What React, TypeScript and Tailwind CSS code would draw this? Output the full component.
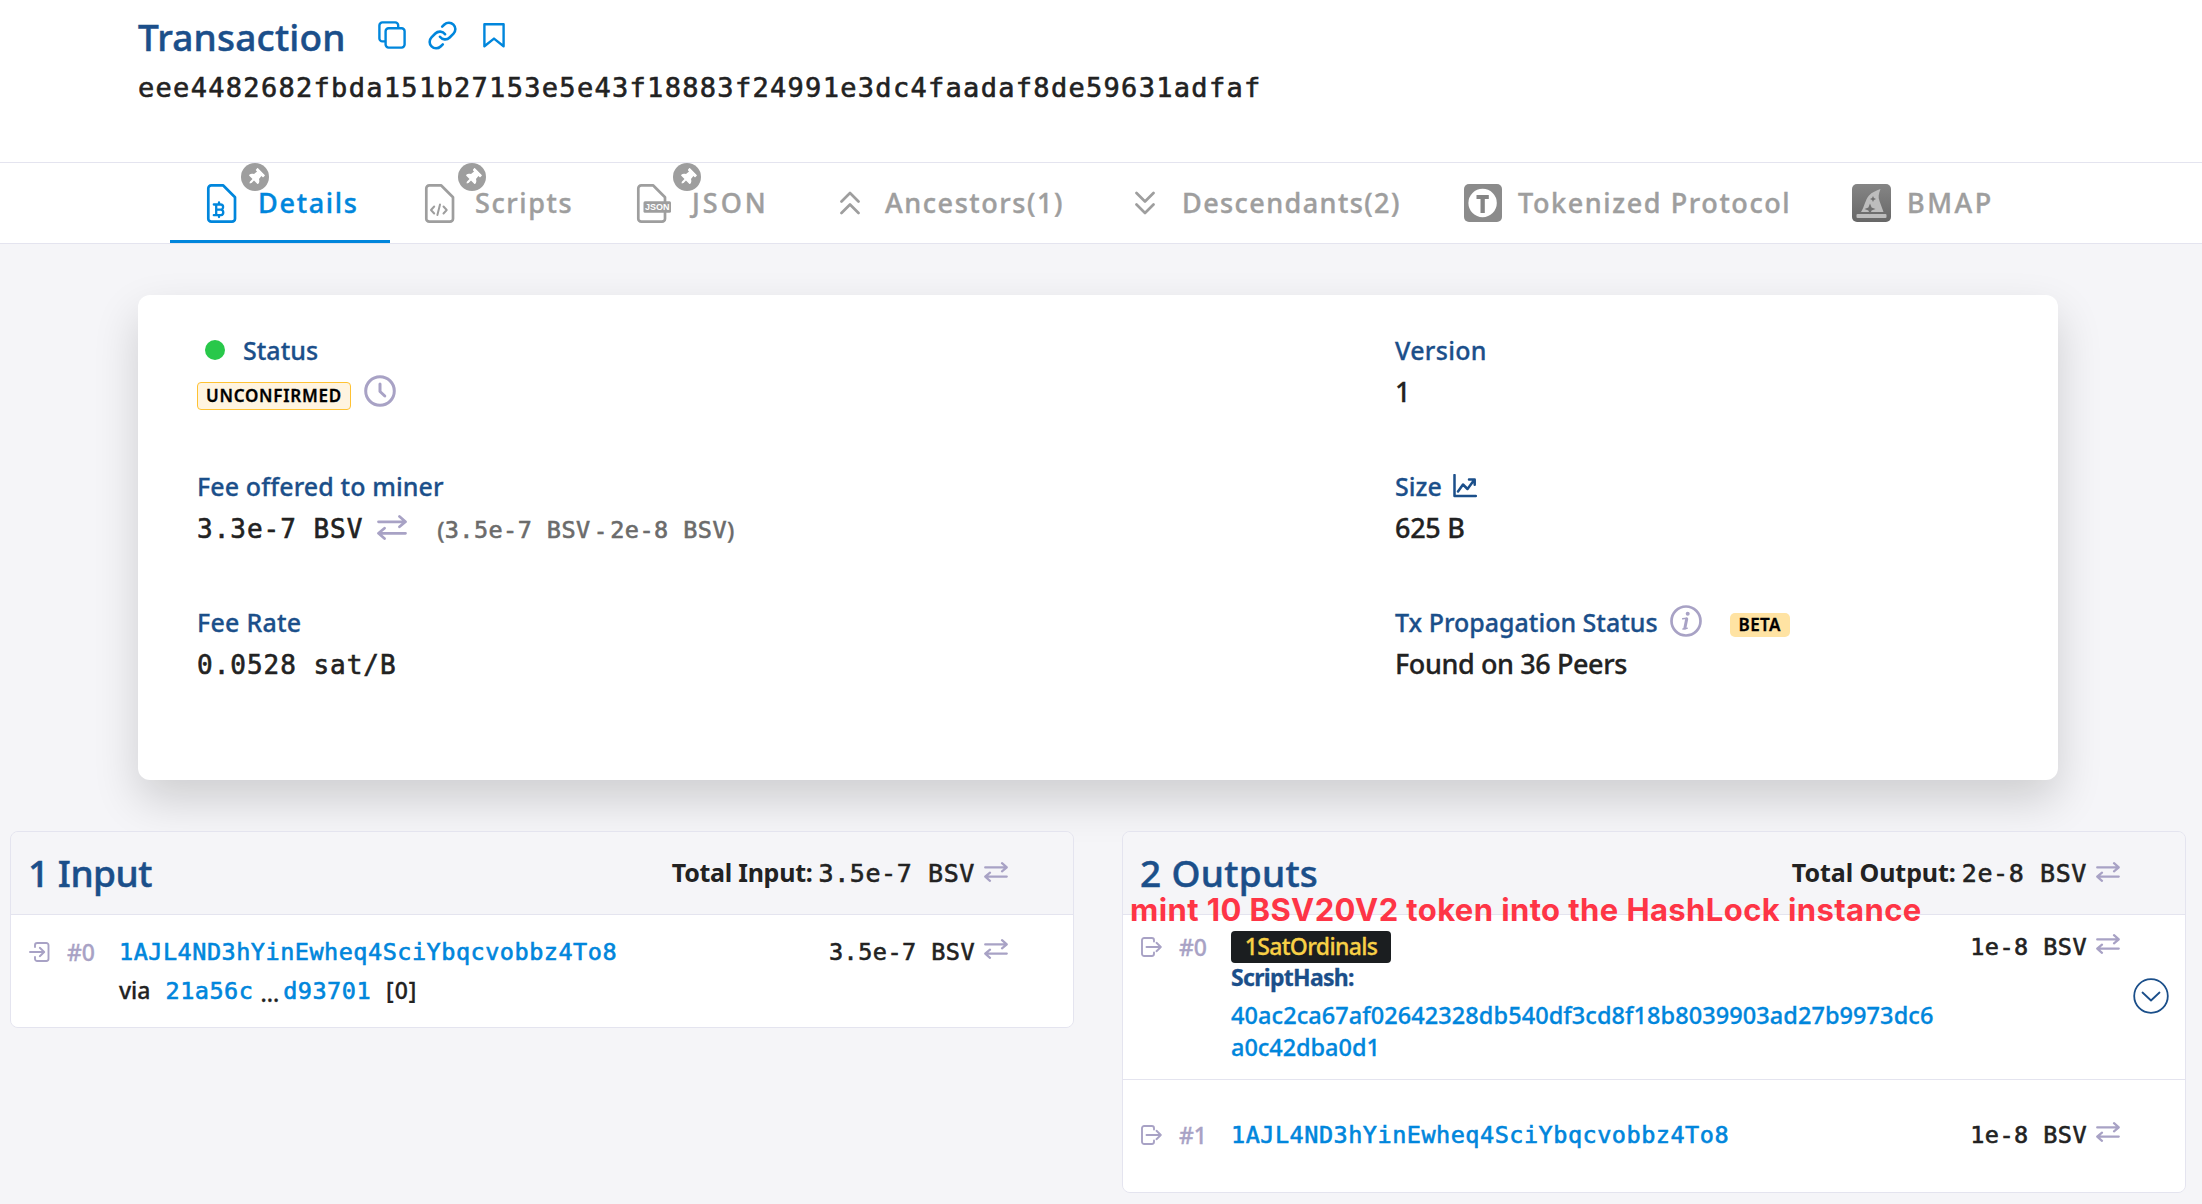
import type { ReactNode } from 'react';
import { FaThumbtack } from 'react-icons/fa';

function SwapIcon({ className = '' }: { className?: string }) {
  return (
    <svg viewBox="0 0 24 20" className={`shrink-0 text-[#a8a2c5] ${className}`} fill="none" stroke="currentColor" strokeWidth="2.2" strokeLinecap="round" strokeLinejoin="round">
      <path d="M1.2 5.4H22.6M18 1.2l4.8 4.2L18 9.4" />
      <path d="M22.8 14.6H1.4M6 10.6l-4.8 4L6 18.8" />
    </svg>
  );
}

function CopyIcon() {
  return (
    <svg viewBox="0 0 28 28" className="size-7" fill="none" stroke="currentColor" strokeWidth="2.4">
      <rect x="7.6" y="7.2" width="19" height="19.4" rx="3" />
      <path d="M7.6 20.4H4.4a3 3 0 0 1-3-3V4.4a3 3 0 0 1 3-3h12.8a3 3 0 0 1 3 3v2.8" />
    </svg>
  );
}

function LinkIcon() {
  return (
    <svg viewBox="0 0 24 24" className="size-[31px]" fill="none" stroke="currentColor" strokeWidth="2" strokeLinecap="round" strokeLinejoin="round">
      <path d="M10 13a5 5 0 0 0 7.54.54l3-3a5 5 0 0 0-7.07-7.07l-1.72 1.71" />
      <path d="M14 11a5 5 0 0 0-7.54-.54l-3 3a5 5 0 0 0 7.07 7.07l1.71-1.71" />
    </svg>
  );
}

function BookmarkIcon() {
  return (
    <svg viewBox="0 0 22 25" className="h-[25px] w-[22px]" fill="none" stroke="currentColor" strokeWidth="2.4" strokeLinejoin="round">
      <path d="M1.4 1.3h19.2v22L11 15.6 1.4 23.3z" />
    </svg>
  );
}

function FileIcon({ children }: { children: ReactNode }) {
  return (
    <svg viewBox="0 0 34 39" className="h-[39px] w-[34px] overflow-visible" fill="none" stroke="currentColor" strokeWidth="2.7" strokeLinecap="round" strokeLinejoin="round">
      <path d="M4.3 1.3H16L28 13.200v21.500a3 3 0 0 1-3 3H4.3a3 3 0 0 1-3-3V4.300a3 3 0 0 1 3-3z" />
      {children}
    </svg>
  );
}

function BitcoinFile() {
  return (
    <FileIcon>
      <path strokeWidth="2.3" d="M6.800 20.500h6.700a2.600 2.600 0 0 1 0 5.200H9.200M13.500 25.700h.5a2.800 2.800 0 0 1 0 5.500H6.800M9.200 20.500v10.700M12 18.300v2.200M12 31.200v1.800" />
    </FileIcon>
  );
}

function CodeFile() {
  return (
    <FileIcon>
      <path strokeWidth="2" d="M9.200 22.500L6 26l3.200 3.500M18.500 22.500l3.200 3.500-3.200 3.500M15 20.500l-2.600 10.500" />
    </FileIcon>
  );
}

function JsonFile() {
  return (
    <FileIcon>
      <rect x="6.500" y="17.300" width="27.500" height="11.400" rx="1.500" fill="currentColor" stroke="none" />
      <text x="20.300" y="26.200" textAnchor="middle" fontSize="9" fontWeight="700" fontFamily="Liberation Sans" fill="#fff" stroke="none">JSON</text>
    </FileIcon>
  );
}

function ChevronsIcon({ down = false }: { down?: boolean }) {
  return (
    <svg viewBox="0 0 20 24" className={`h-6 w-5 ${down ? 'rotate-180' : ''}`} fill="none" stroke="currentColor" strokeWidth="2.7" strokeLinecap="round" strokeLinejoin="round">
      <path d="M1.500 10.500L10 2l8.500 8.500M1.500 22L10 13.500l8.500 8.500" />
    </svg>
  );
}

function TokenizedIcon() {
  return (
    <svg viewBox="0 0 38 38" className="size-[38px]">
      <rect width="38" height="38" rx="5" fill="#8b8b8b" />
      <circle cx="18.600" cy="19" r="14.200" fill="#fff" />
      <path d="M12.500 11h12.300v4h-4v14h-4.300V15h-4z" fill="#858585" />
    </svg>
  );
}

function HatIcon() {
  return (
    <svg viewBox="0 0 39 38" className="h-[38px] w-[39px]">
      <defs>
        <linearGradient id="hat" x1="0" y1="0" x2="0" y2="1">
          <stop offset="0" stopColor="#858585" />
          <stop offset="1" stopColor="#676767" />
        </linearGradient>
      </defs>
      <rect width="39" height="38" rx="5" fill="url(#hat)" />
      <path d="M28.500 5c-2 5-2.400 8-1 12l4 11H9c3.500-5 4-12 8-16.500C20 8 24 7 28.500 5z" fill="#bdbdbd" />
      <rect x="4.500" y="30" width="30" height="4" rx="1" fill="#bdbdbd" />
      <path d="M18 19.500l1.600 3.900 3.900 1.600-3.900 1.600L18 30.500l-1.600-3.900-3.900-1.600 3.900-1.600zM21 12l.9 2.100 2.100.9-2.100.9-.9 2.100-.9-2.100-2.100-.9 2.100-.9z" fill="#707070" />
    </svg>
  );
}

function ClockIcon() {
  return (
    <svg viewBox="0 0 32 32" className="size-8" fill="none" stroke="#a8a2c5" strokeWidth="3" strokeLinecap="round" strokeLinejoin="round">
      <circle cx="16" cy="16" r="14.300" />
      <path d="M16 9v7.500l4.800 4.500" />
    </svg>
  );
}

function InfoIcon() {
  return (
    <svg viewBox="0 0 32 32" className="size-8" fill="none" stroke="#a8a2c5" strokeWidth="2.700" strokeLinecap="round" strokeLinejoin="round">
      <circle cx="16" cy="16" r="14.500" />
      <circle cx="17.700" cy="8.800" r="2" fill="#a8a2c5" stroke="none" />
      <path strokeWidth="1.500" d="M12.700 13.800l4-.6M13 24l4.200-.8" />
      <path strokeWidth="3" d="M16.700 14l-1.800 9" />
    </svg>
  );
}

function ChartIcon() {
  return (
    <svg viewBox="0 0 24 24" className="size-6" fill="none" stroke="currentColor" strokeWidth="2.500" strokeLinecap="round" strokeLinejoin="round">
      <path d="M1.500 1v21h21.300M5 17.500l5-7 4.500 4.500 7-9.500M16 5.500h5.700v5.300" />
    </svg>
  );
}

function FlowIcon({ out = false }: { out?: boolean }) {
  return (
    <svg viewBox="0 0 21 20" className="h-5 w-[21px]" fill="none" stroke="#a8a2c5" strokeWidth="1.900" strokeLinecap="round" strokeLinejoin="round">
      {out ? (
        <path d="M13 4.500V3.200a2.200 2.200 0 0 0-2.200-2.200H3.200A2.200 2.200 0 0 0 1 3.200v13.600A2.200 2.200 0 0 0 3.200 19h7.600a2.200 2.200 0 0 0 2.200-2.200v-1.300M5.500 10H19.500M15.500 5.800L19.800 10l-4.300 4.200" />
      ) : (
        <path d="M6 5V3.200A2.200 2.200 0 0 1 8.200 1h9.100a2.200 2.200 0 0 1 2.200 2.200v13.600a2.200 2.200 0 0 1-2.200 2.200H8.200A2.200 2.200 0 0 1 6 16.800V15M1 10h14M10.800 5.800L15.200 10l-4.400 4.200" />
      )}
    </svg>
  );
}

function Mono({ className = '', children }: { className?: string; children: ReactNode }) {
  return (
    <span className={`font-['DejaVu_Sans_Mono',monospace] whitespace-pre [-webkit-text-stroke:0.6px_currentColor] ${className}`}>{children}</span>
  );
}

function Tab({ className, label, labelClass, icon, pin, active = false }: { className: string; label: string; labelClass: string; icon: ReactNode; pin?: string; active?: boolean }) {
  return (
    <div className={`relative flex h-20 items-center ${active ? 'text-[#0086dc]' : 'text-[#9e9e9e]'} ${className}`}>
      {icon}
      <span className={`text-[27px] whitespace-nowrap [-webkit-text-stroke:0.4px_currentColor] ${labelClass}`}>{label}</span>
      {pin && (
        <span className={`absolute top-0 flex size-7 items-center justify-center rounded-full bg-[#9e9e9e] text-white ${pin}`}>
          <FaThumbtack className="size-[17px] rotate-45" />
        </span>
      )}
      {active && <span className="absolute inset-x-0 bottom-0 h-[3px] bg-[#0086dc]" />}
    </div>
  );
}

function Field({ label, children }: { label: ReactNode; children: ReactNode }) {
  return (
    <div>
      <div className="flex h-8 items-center text-[25px] leading-8 text-[#1b4f8a] [-webkit-text-stroke:0.3px_currentColor]">{label}</div>
      <div className="mt-2.5 flex h-8 text-[27px] leading-8 [-webkit-text-stroke:0.3px_currentColor]">{children}</div>
    </div>
  );
}

function Amount({ value }: { value: string }) {
  return (
    <div className="ml-auto flex h-8 pr-[65px]">
      <Mono className="text-[23.5px] leading-8 tracking-[0.45px]">{value}</Mono>
      <SwapIcon className="mt-[3px] ml-[9px] h-5 w-6" />
    </div>
  );
}

function PanelHeader({ title, titleClass, label, labelClass, total }: { title: string; titleClass: string; label: string; labelClass: string; total: string }) {
  return (
    <div className="flex h-[83px] items-center border-b border-[#e4e4ef] bg-[#f5f5f8] pr-[65px] pl-[17px]">
      <h2 className={`text-[37px] leading-10 text-[#1b4f8a] [-webkit-text-stroke:0.5px_currentColor] ${titleClass}`}>{title}</h2>
      <div className="ml-auto flex items-baseline text-[25px] leading-8">
        <span className={`font-bold ${labelClass}`}>{label}</span>
        <Mono className="ml-1.5 text-[25px] tracking-[0.6px]">{total}</Mono>
      </div>
      <SwapIcon className="mb-[3px] ml-[9px] h-5 w-6" />
    </div>
  );
}

function Row({ className, out, index, children, amount }: { className: string; out?: boolean; index: string; children: ReactNode; amount: string }) {
  return (
    <div className={`relative flex bg-white pl-[18px] text-[23px] leading-8 [-webkit-text-stroke:0.3px_currentColor] ${className}`}>
      <span className="flex h-8 w-[38px] items-center"><FlowIcon out={out} /></span>
      <span className="w-[52px] text-[#a8a2c5]">{index}</span>
      <div>{children}</div>
      <Amount value={amount} />
    </div>
  );
}

export default function App() {
  return (
    <div className="h-[1204px] w-[2202px] overflow-hidden bg-[#f5f5f8] font-['Noto_Sans',sans-serif] font-medium text-[#222]">
      <header className="h-[162px] bg-white pt-[17px] pl-[138px]">
        <div className="flex h-10 items-center">
          <h1 className="w-[240px] text-[37px] leading-10 tracking-[0.2px] text-[#1b4f8a] [-webkit-text-stroke:0.5px_currentColor]">Transaction</h1>
          <div className="mb-1 flex items-center text-[#0086dc]">
            <CopyIcon />
            <span className="ml-[21px]"><LinkIcon /></span>
            <span className="ml-[25px]"><BookmarkIcon /></span>
          </div>
        </div>
        <Mono className="mt-[15px] block text-[27px] leading-8 tracking-[1.3px]">eee4482682fbda151b27153e5e43f18883f24991e3dc4faadaf8de59631adfaf</Mono>
      </header>

      <nav className="flex h-[82px] border-y border-[#e4e4ef] bg-white pl-[170px]">
        <Tab active className="w-[220px] pl-[37px]" icon={<BitcoinFile />} label="Details" labelClass="ml-[17px] tracking-[1.7px]" pin="left-[71px]" />
        <Tab className="w-[213px] pl-[35px]" icon={<CodeFile />} label="Scripts" labelClass="ml-4 tracking-[1.6px]" pin="left-[68px]" />
        <Tab className="w-[201px] pl-[34px]" icon={<JsonFile />} label="JSON" labelClass="ml-[21px] tracking-[3px]" pin="left-[70px]" />
        <Tab className="w-[295px] pl-9" icon={<ChevronsIcon />} label="Ancestors(1)" labelClass="ml-[25px] tracking-[1.57px]" />
        <Tab className="w-[329px] pl-9" icon={<ChevronsIcon down />} label="Descendants(2)" labelClass="ml-[27px] tracking-[1.42px]" />
        <Tab className="w-[388px] pl-9" icon={<TokenizedIcon />} label="Tokenized Protocol" labelClass="ml-4 tracking-[1.6px]" />
        <Tab className="w-[220px] pl-9" icon={<HatIcon />} label="BMAP" labelClass="ml-4 tracking-[2.5px]" />
      </nav>

      <section className="mt-[51px] ml-[138px] grid h-[485px] w-[1920px] auto-rows-[136px] grid-cols-[1198px_1fr] rounded-xl bg-white pt-[39px] pl-[59px] shadow-[0_20px_45px_rgba(0,0,0,0.16)]">
        <Field label={<><span className="mr-[18px] ml-2 size-5 rounded-full bg-[#28c84a]" />Status</>}>
          <span className="mt-1.5 h-7 w-[154px] rounded border border-[#ffc233] bg-[#fff4e0] text-center text-[17px] leading-[26px] font-semibold tracking-[0.75px] text-black">UNCONFIRMED</span>
          <span className="-mt-px ml-[13px]"><ClockIcon /></span>
        </Field>
        <Field label={<span className="tracking-[0.3px]">Version</span>}>1</Field>
        <Field label={<span className="tracking-[0.1px]">Fee offered to miner</span>}>
          <Mono className="text-[26px] leading-[35px] tracking-[0.98px]">3.3e-7 BSV</Mono>
          <SwapIcon className="mt-[3px] ml-[14px] h-[25px] w-[30px]" />
          <span className="ml-[30px] flex text-[23.5px] leading-[37px] text-[#6b6b6b]">
            (<Mono className="tracking-[0.45px]">3.5e-7 BSV</Mono><span className="mx-1.5">-</span><Mono className="tracking-[0.45px]">2e-8 BSV</Mono>)
          </span>
        </Field>
        <Field label={<>Size<span className="ml-[11px]"><ChartIcon /></span></>}><span className="tracking-[-0.3px]">625 B</span></Field>
        <Field label={<span className="tracking-[0.25px]">Fee Rate</span>}>
          <Mono className="text-[26px] leading-[35px] tracking-[0.98px]">0.0528 sat/B</Mono>
        </Field>
        <Field
          label={
            <>
              <span>Tx Propagation Status</span>
              <span className="mb-0.5 ml-3"><InfoIcon /></span>
              <span className="mt-1.5 ml-7 h-6 w-[60px] rounded-[5px] bg-[#ffe3a3] text-center text-[17px] leading-6 font-semibold tracking-[0.4px] text-black">BETA</span>
            </>
          }
        >
          <span className="tracking-[-0.4px]">Found on 36 Peers</span>
        </Field>
      </section>

      <div className="mt-[51px] ml-2.5 flex items-start gap-12">
        <section className="w-[1064px] overflow-hidden rounded-lg border border-[#e4e4ef]">
          <PanelHeader title="1 Input" titleClass="tracking-[-0.5px]" label="Total Input:" labelClass="tracking-[-0.27px]" total="3.5e-7 BSV" />
          <Row className="h-28 pt-[21px]" index="#0" amount="3.5e-7 BSV">
            <Mono className="block text-[23.5px] tracking-[0.5px] text-[#0086dc]">1AJL4ND3hYinEwheq4SciYbqcvobbz4To8</Mono>
            <div className="mt-1.5 flex items-baseline">
              <span>via</span>
              <Mono className="ml-[15px] text-[23.5px] tracking-[0.5px] text-[#0086dc]">21a56c</Mono>
              <span className="mt-[3px] ml-[7px] self-start">...</span>
              <Mono className="ml-1 text-[23.5px] tracking-[0.5px] text-[#0086dc]">d93701</Mono>
              <span className="ml-[15px] tracking-[1px]">[0]</span>
            </div>
          </Row>
        </section>

        <section className="relative w-[1064px] rounded-lg border border-[#e4e4ef]">
          <div className="overflow-hidden rounded-[7px]">
            <PanelHeader title="2 Outputs" titleClass="tracking-[0.3px]" label="Total Output:" labelClass="tracking-[-0.07px]" total="2e-8 BSV" />
            <Row out className="h-[165px] border-b border-[#e4e4ef] pt-4" index="#0" amount="1e-8 BSV">
              <div className="h-8 w-40 rounded bg-[#1b1e20] text-center leading-[30px] tracking-[-0.65px] text-[#f8d046]">1SatOrdinals</div>
              <div className="mt-0.5 leading-6 font-bold tracking-[-0.7px] text-[#1b4f8a]">ScriptHash:</div>
              <div className="mt-2.5 w-[715px] text-[23.5px] text-[#0086dc]">
                <div className="tracking-[0.07px]">40ac2ca67af02642328db540df3cd8f18b8039903ad27b9973dc6</div>
                <div className="tracking-[-0.05px]">a0c42dba0d1</div>
              </div>
              <svg viewBox="0 0 36 36" className="absolute top-[63px] right-4 size-9" fill="none" stroke="#1b4f8a" strokeWidth="1.800" strokeLinecap="round" strokeLinejoin="round">
                <circle cx="18" cy="18" r="16.800" />
                <path d="M9.500 14.500L18 22.500l8.500-8" />
              </svg>
            </Row>
            <Row out className="h-28 pt-[39px]" index="#1" amount="1e-8 BSV">
              <Mono className="block text-[23.5px] tracking-[0.5px] text-[#0086dc]">1AJL4ND3hYinEwheq4SciYbqcvobbz4To8</Mono>
            </Row>
          </div>
          <div className="absolute top-[60px] left-[7px] font-['Inter',sans-serif] text-[31px] leading-9 font-bold tracking-[0.4px] whitespace-nowrap text-[#fe3546]">
            mint 10 BSV20V2 token into the HashLock instance
          </div>
        </section>
      </div>
    </div>
  );
}
